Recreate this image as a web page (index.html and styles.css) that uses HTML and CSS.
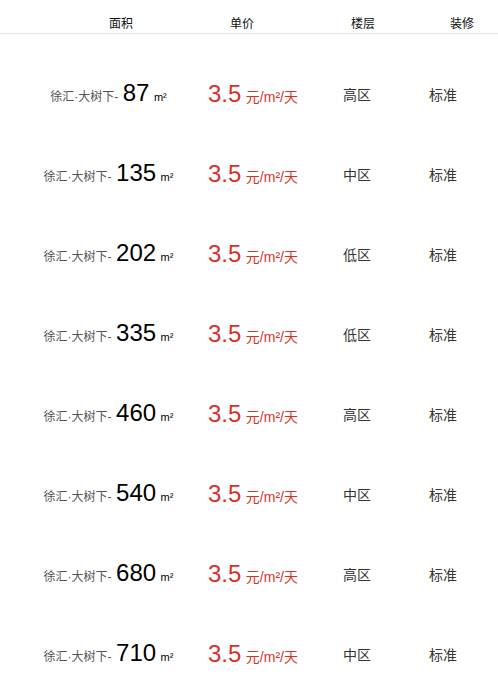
FILE: index.html
```html
<!DOCTYPE html>
<html lang="zh">
<head>
<meta charset="utf-8">
<link rel="stylesheet" href="styles.css">
</head>
<body>
<div class="head">
  <div class="h h1">面积</div>
  <div class="h h2">单价</div>
  <div class="h h3">楼层</div>
  <div class="h h4">装修</div>
</div>
<div class="list">
  <div class="row"><div class="c area"><span class="loc">徐汇·大树下-</span> <span class="num">87</span> <span class="unit">m²</span></div><div class="c price"><span class="pn">3.5</span> <span class="pu">元/m²/天</span></div><div class="c floor">高区</div><div class="c deco">标准</div></div>
  <div class="row"><div class="c area"><span class="loc">徐汇·大树下-</span> <span class="num">135</span> <span class="unit">m²</span></div><div class="c price"><span class="pn">3.5</span> <span class="pu">元/m²/天</span></div><div class="c floor">中区</div><div class="c deco">标准</div></div>
  <div class="row"><div class="c area"><span class="loc">徐汇·大树下-</span> <span class="num">202</span> <span class="unit">m²</span></div><div class="c price"><span class="pn">3.5</span> <span class="pu">元/m²/天</span></div><div class="c floor">低区</div><div class="c deco">标准</div></div>
  <div class="row"><div class="c area"><span class="loc">徐汇·大树下-</span> <span class="num">335</span> <span class="unit">m²</span></div><div class="c price"><span class="pn">3.5</span> <span class="pu">元/m²/天</span></div><div class="c floor">低区</div><div class="c deco">标准</div></div>
  <div class="row"><div class="c area"><span class="loc">徐汇·大树下-</span> <span class="num">460</span> <span class="unit">m²</span></div><div class="c price"><span class="pn">3.5</span> <span class="pu">元/m²/天</span></div><div class="c floor">高区</div><div class="c deco">标准</div></div>
  <div class="row"><div class="c area"><span class="loc">徐汇·大树下-</span> <span class="num">540</span> <span class="unit">m²</span></div><div class="c price"><span class="pn">3.5</span> <span class="pu">元/m²/天</span></div><div class="c floor">中区</div><div class="c deco">标准</div></div>
  <div class="row"><div class="c area"><span class="loc">徐汇·大树下-</span> <span class="num">680</span> <span class="unit">m²</span></div><div class="c price"><span class="pn">3.5</span> <span class="pu">元/m²/天</span></div><div class="c floor">高区</div><div class="c deco">标准</div></div>
  <div class="row"><div class="c area"><span class="loc">徐汇·大树下-</span> <span class="num">710</span> <span class="unit">m²</span></div><div class="c price"><span class="pn">3.5</span> <span class="pu">元/m²/天</span></div><div class="c floor">中区</div><div class="c deco">标准</div></div>
</div>
</body>
</html>
```
FILE: styles.css
```css
html, body {
  margin: 0;
  padding: 0;
  background: #fff;
}
body {
  font-family: "Liberation Sans", "Noto Sans CJK SC", sans-serif;
  color: #000;
}
.head {
  display: grid;
  grid-template-columns: 109px 121px 121px 99px 1fr;
  height: 33px;
  border-bottom: 1px solid #e5e5e5;
  align-items: end;
  box-sizing: content-box;
}
.h {
  font-size: 12px;
  line-height: 16px;
  padding-bottom: 1px;
  color: #111;
}
.h1 { grid-column: 2; }
.h2 { grid-column: 3; }
.h3 { grid-column: 4; }
.h4 { grid-column: 5; }
.list {
  padding-top: 21px;
}
.row {
  display: grid;
  grid-template-columns: 208px 135px 86px 1fr;
  height: 80px;
  align-items: center;
}
.c {
  white-space: nowrap;
  line-height: 26px;
}
.area {
  padding-left: 9px;
  text-align: center;
}
.loc {
  font-size: 12px;
  color: #555;
}
.num {
  font-size: 24px;
  color: #000;
}
.unit {
  font-size: 11px;
  color: #000;
}
.price {
  color: #d7312a;
}
.pn {
  font-size: 24px;
}
.pu {
  font-size: 14px;
}
.floor, .deco {
  font-size: 14px;
  color: #333;
}
```
